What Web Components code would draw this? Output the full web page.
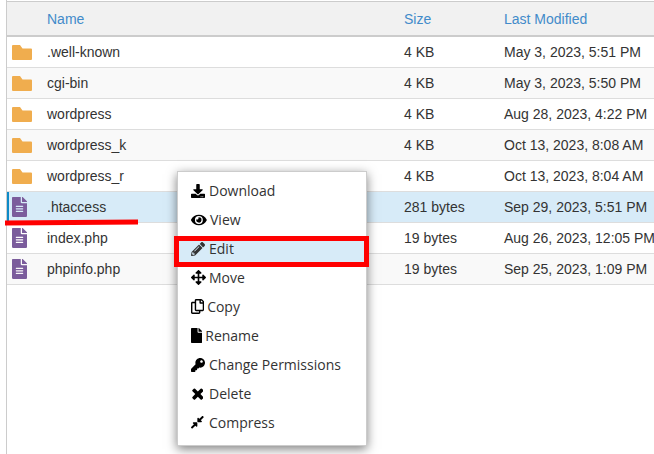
<!DOCTYPE html>
<html>
<head>
<meta charset="utf-8">
<title>File Manager</title>
<style>
  html, body { margin: 0; height: 100%; overflow: hidden; background: #fff; }
  body { font-family: "Liberation Sans", Arial, sans-serif; }
</style>
</head>
<body>
<file-manager>
  <file-row icon="folder" name=".well-known" size="4 KB" modified="May 3, 2023, 5:51 PM"></file-row>
  <file-row icon="folder" name="cgi-bin" size="4 KB" modified="May 3, 2023, 5:50 PM"></file-row>
  <file-row icon="folder" name="wordpress" size="4 KB" modified="Aug 28, 2023, 4:22 PM"></file-row>
  <file-row icon="folder" name="wordpress_k" size="4 KB" modified="Oct 13, 2023, 8:08 AM"></file-row>
  <file-row icon="folder" name="wordpress_r" size="4 KB" modified="Oct 13, 2023, 8:04 AM"></file-row>
  <file-row icon="doc" name=".htaccess" size="281 bytes" modified="Sep 29, 2023, 5:51 PM" selected></file-row>
  <file-row icon="doc" name="index.php" size="19 bytes" modified="Aug 26, 2023, 12:05 PM"></file-row>
  <file-row icon="doc" name="phpinfo.php" size="19 bytes" modified="Sep 25, 2023, 1:09 PM"></file-row>
</file-manager>
<context-menu>
  <menu-item icon="download" gap="4">Download</menu-item>
  <menu-item icon="eye" gap="3.25">View</menu-item>
  <menu-item icon="pencil" gap="4" active>Edit</menu-item>
  <menu-item icon="arrows" gap="3">Move</menu-item>
  <menu-item icon="files" gap="3">Copy</menu-item>
  <menu-item icon="file" gap="3">Rename</menu-item>
  <menu-item icon="key" gap="4">Change Permissions</menu-item>
  <menu-item icon="times" gap="5.500">Delete</menu-item>
  <menu-item icon="compress" gap="5.3">Compress</menu-item>
</context-menu>
<red-mark></red-mark>

<script>
// vb = glyph box, h = drawn height in px
const ICONS = {
  folder: { vb: "0 0 20 15", h: 15, d: "M1 0h7l2.500 3.500H19a1 1 0 0 1 1 1V14a1 1 0 0 1-1 1H1a1 1 0 0 1-1-1V1a1 1 0 0 1 1-1z" },
  doc: { vb: "0 0 384 512", h: 20, d: "M224 136V0H24C10.700 0 0 10.700 0 24v464c0 13.300 10.700 24 24 24h336c13.300 0 24-10.700 24-24V160H248c-13.200 0-24-10.800-24-24zm64 236c0 6.600-5.400 12-12 12H108c-6.600 0-12-5.400-12-12v-8c0-6.600 5.400-12 12-12h168c6.600 0 12 5.400 12 12v8zm0-64c0 6.600-5.400 12-12 12H108c-6.600 0-12-5.400-12-12v-8c0-6.600 5.400-12 12-12h168c6.600 0 12 5.400 12 12v8zm0-72v8c0 6.600-5.400 12-12 12H108c-6.600 0-12-5.400-12-12v-8c0-6.600 5.400-12 12-12h168c6.600 0 12 5.400 12 12zm96-114.100v6.100H256V0h6.100c6.400 0 12.500 2.500 17 7l97.900 98c4.500 4.500 7 10.600 7 16.900z" },
  download: { vb: "0 0 512 512", h: 14, d: "M216 0h80c13.300 0 24 10.700 24 24v168h87.700c17.800 0 26.700 21.500 14.100 34.100L269.700 378.300c-7.500 7.500-19.800 7.500-27.300 0L90.100 226.100c-12.600-12.600-3.700-34.100 14.100-34.100H192V24c0-13.300 10.700-24 24-24zm296 376v112c0 13.300-10.700 24-24 24H24c-13.300 0-24-10.700-24-24V376c0-13.300 10.700-24 24-24h146.700l49 49c20.100 20.100 52.500 20.100 72.600 0l49-49H488c13.300 0 24 10.700 24 24zm-124 88c0-11-9-20-20-20s-20 9-20 20 9 20 20 20 20-9 20-20zm64 0c0-11-9-20-20-20s-20 9-20 20 9 20 20 20 20-9 20-20z" },
  eye: { vb: "0 0 576 512", h: 14, d: "M572.520 241.400C518.290 135.590 410.930 64 288 64S57.680 135.640 3.480 241.410a32.350 32.350 0 0 0 0 29.190C57.710 376.410 165.070 448 288 448s230.320-71.640 284.520-177.410a32.350 32.350 0 0 0 0-29.190zM288 400a144 144 0 1 1 144-144 143.930 143.930 0 0 1-144 144zm0-240a95.310 95.310 0 0 0-25.310 3.790 47.850 47.850 0 0 1-66.900 66.900A95.780 95.780 0 1 0 288 160z" },
  pencil: { vb: "0 0 512 512", h: 14, d: "M497.900 142.100l-46.100 46.100c-4.700 4.700-12.300 4.700-17 0l-111-111c-4.700-4.700-4.700-12.300 0-17l46.100-46.100c18.700-18.700 49.100-18.700 67.900 0l60.100 60.100c18.800 18.700 18.800 49.100 0 67.900zM284.200 99.800L21.600 362.400.4 483.900c-2.900 16.400 11.400 30.600 27.800 27.800l121.500-21.300 262.600-262.600c4.700-4.700 4.700-12.300 0-17l-111-111c-4.800-4.700-12.400-4.700-17.100 0zM124.100 339.900c-5.500-5.500-5.500-14.300 0-19.800l154-154c5.500-5.500 14.300-5.500 19.800 0s5.500 14.300 0 19.800l-154 154c-5.500 5.500-14.300 5.500-19.800 0zM88 424h48v36.300l-64.500 11.300-31.100-31.100L51.700 376H88v48z" },
  arrows: { vb: "0 0 512 512", h: 15, d: "M352.201 425.775l-79.196 79.196c-9.373 9.373-24.568 9.373-33.941 0l-79.196-79.196c-15.119-15.119-4.411-40.971 16.971-40.971h51.162L228 284H127.196v51.162c0 21.382-25.851 32.090-40.971 16.971L7.029 272.937c-9.373-9.373-9.373-24.569 0-33.941L86.225 159.800c15.119-15.119 40.971-4.411 40.971 16.971V228H228V127.196h-51.230c-21.382 0-32.090-25.851-16.971-40.971l79.196-79.196c9.373-9.373 24.568-9.373 33.941 0l79.196 79.196c15.119 15.119 4.411 40.971-16.971 40.971h-51.162V228h100.804v-51.162c0-21.382 25.851-32.090 40.971-16.971l79.196 79.196c9.373 9.373 9.373 24.569 0 33.941L425.773 352.200c-15.119 15.119-40.971 4.411-40.971-16.971V284H284v100.804h51.230c21.382 0 32.090 25.851 16.971 40.971z" },
  files: { vb: "0 0 448 512", h: 15, d: "M433.941 65.941l-51.882-51.882A48 48 0 0 0 348.118 0H176c-26.510 0-48 21.490-48 48v48H48c-26.510 0-48 21.490-48 48v320c0 26.510 21.490 48 48 48h224c26.510 0 48-21.490 48-48v-48h80c26.510 0 48-21.490 48-48V99.882a48 48 0 0 0-14.059-33.941zM266 464H54a6 6 0 0 1-6-6V150a6 6 0 0 1 6-6h74v224c0 26.510 21.490 48 48 48h96v42a6 6 0 0 1-6 6zm128-96H182a6 6 0 0 1-6-6V54a6 6 0 0 1 6-6h106v88c0 13.255 10.745 24 24 24h88v202a6 6 0 0 1-6 6zm6-256h-64V48h9.632c1.591 0 3.117.632 4.243 1.757l48.368 48.368a6 6 0 0 1 1.757 4.243V112z" },
  file: { vb: "0 0 384 512", h: 15, d: "M224 136V0H24C10.700 0 0 10.700 0 24v464c0 13.300 10.700 24 24 24h336c13.300 0 24-10.700 24-24V160H248c-13.200 0-24-10.800-24-24zm160-14.100v6.100H256V0h6.100c6.400 0 12.500 2.500 17 7l97.900 98c4.500 4.500 7 10.600 7 16.900z" },
  key: { vb: "0 0 512 512", h: 14, d: "M512 176.001C512 273.203 433.202 352 336 352c-11.220 0-22.190-1.062-32.827-3.069l-24.012 27.014A23.999 23.999 0 0 1 261.223 384H224v40c0 13.255-10.745 24-24 24h-40v40c0 13.255-10.745 24-24 24H24c-13.255 0-24-10.745-24-24v-78.059c0-6.365 2.529-12.470 7.029-16.971l161.802-161.802C163.108 213.814 160 195.271 160 176 160 78.798 238.797.001 335.999 0 433.488-.001 512 78.511 512 176.001zM336 128c0 26.510 21.490 48 48 48s48-21.490 48-48-21.490-48-48-48-48 21.490-48 48z" },
  times: { vb: "174 0 1316 1792", h: 17, d: "M1490 1322q0 40-28 68l-136 136q-28 28-68 28t-68-28l-294-294-294 294q-28 28-68 28t-68-28l-136-136q-28-28-28-68t28-68l294-294-294-294q-28-28-28-68t28-68l136-136q28-28 68-28t68 28l294 294 294-294q28-28 68-28t68 28l136 136q28 28 28 68t-28 68l-294 294 294 294q28 28 28 68z" },
  compress: { vb: "0 0 448 512", h: 14.5, d: "M4.686 427.314L104 328l-32.922-31.029C55.958 281.851 66.666 256 88.048 256h112C213.303 256 224 266.745 224 280v112c0 21.382-25.803 32.090-40.922 16.971L151 376l-99.314 99.314c-6.248 6.248-16.379 6.248-22.627 0L4.686 449.941c-6.248-6.248-6.248-16.379 0-22.627zM443.314 84.686L344 184l32.922 32.029c15.120 15.119 4.412 40.971-16.970 40.971h-112C234.697 257 224 246.255 224 233V121c0-21.382 25.803-32.090 40.922-16.971L297 136l99.314-99.314c6.248-6.248 16.379-6.248 22.627 0l25.373 25.373c6.248 6.248 6.248 16.379 0 22.627z" }
};

function iconSvg(name) {
  const ic = ICONS[name];
  const vb = ic.vb.split(" ").map(Number);
  const width = vb[2] * ic.h / vb[3];
  return `<svg width="${width}" height="${ic.h}" viewBox="${ic.vb}" fill="currentColor"><path d="${ic.d}"/></svg>`;
}

class FileManager extends HTMLElement {
  constructor() {
    super();
    this.attachShadow({ mode: "open" });
  }
  connectedCallback() {
    this.shadowRoot.innerHTML = `
    <style>
      :host {
        display: block;
        box-sizing: border-box;
        height: 100vh;
        margin-left: 6px;
        padding-top: 1px;
        border-left: 1px solid #ccc;
        font: 14px/20px "Liberation Sans", Arial, sans-serif;
        color: #333;
      }
      .head {
        display: grid;
        grid-template-columns: 40px 357px 100px 1fr;
        align-items: center;
        height: 33px;
        border-top: 1px solid #ccc;
        border-bottom: 2px solid #ccc;
        background: #f1f1f1;
        color: #428bca;
      }
      .head span:nth-child(1) { grid-column: 2; }
    </style>
    <div class="head"><span>Name</span><span>Size</span><span>Last Modified</span></div>
    <slot></slot>`;
  }
}

class FileRow extends HTMLElement {
  constructor() {
    super();
    this.attachShadow({ mode: "open" });
  }
  connectedCallback() {
    const a = (n) => this.getAttribute(n);
    const isFolder = a("icon") === "folder";
    this.shadowRoot.innerHTML = `
    <style>
      :host {
        display: grid;
        grid-template-columns: 40px 357px 100px 1fr;
        align-items: center;
        height: 30px;
        border-bottom: 1px solid #ddd;
        white-space: nowrap;
        background: #fff;
      }
      :host(:nth-child(even)) { background: #f9f9f9; }
      :host([selected]) {
        background: #d7ebf8;
        box-shadow: inset 2px 0 0 #0d8ac7;
      }
      .ic { display: flex; padding-left: 5px; color: ${isFolder ? "#f0ad4e" : "#7b5c9c"}; }
      .ic svg { display: block; }
    </style>
    <span class="ic">${iconSvg(a("icon"))}</span>
    <span>${a("name")}</span>
    <span>${a("size")}</span>
    <span>${a("modified")}</span>`;
  }
}

class ContextMenu extends HTMLElement {
  constructor() {
    super();
    this.attachShadow({ mode: "open" });
  }
  connectedCallback() {
    this.shadowRoot.innerHTML = `
    <style>
      :host {
        position: absolute;
        left: 177px;
        top: 171px;
        box-sizing: border-box;
        width: 190px;
        height: 275px;
        padding: 4px 0;
        background: #fff;
        border: 1px solid #ccc;
        box-shadow: 0 3px 10px rgba(0, 0, 0, .5);
        display: flex;
        flex-direction: column;
      }
    </style>
    <slot></slot>`;
  }
}

class MenuItem extends HTMLElement {
  constructor() {
    super();
    this.attachShadow({ mode: "open" });
  }
  connectedCallback() {
    const name = this.getAttribute("icon");
    this.shadowRoot.innerHTML = `
    <style>
      :host {
        display: flex;
        align-items: center;
        height: 29px;
        padding-left: 13px;
        gap: ${this.getAttribute("gap")}px;
        font: 14px/20px "Open Sans", sans-serif;
        color: #333;
        white-space: nowrap;
      }
      :host([active]) { position: relative; }
      :host([active])::before {
        content: "";
        position: absolute;
        left: -4px;
        top: 2px;
        width: 185px;
        height: 21px;
        border: 5px solid #f00;
        background: #d7ebf8;
      }
      svg, span { position: relative; }
      svg { color: #000; display: block; }
      :host([active]) svg { color: #333; }
    </style>
    ${iconSvg(name)}<span><slot></slot></span>`;
  }
}

class RedMark extends HTMLElement {
  constructor() {
    super();
    this.attachShadow({ mode: "open" }).innerHTML = `
    <style>
      :host {
        position: absolute;
        left: 5px;
        top: 219.5px;
        width: 133px;
        height: 5px;
        background: #f00;
        transform: rotate(-.5deg);
      }
    </style>`;
  }
}

customElements.define("file-manager", FileManager);
customElements.define("file-row", FileRow);
customElements.define("context-menu", ContextMenu);
customElements.define("menu-item", MenuItem);
customElements.define("red-mark", RedMark);
</script>
</body>
</html>
